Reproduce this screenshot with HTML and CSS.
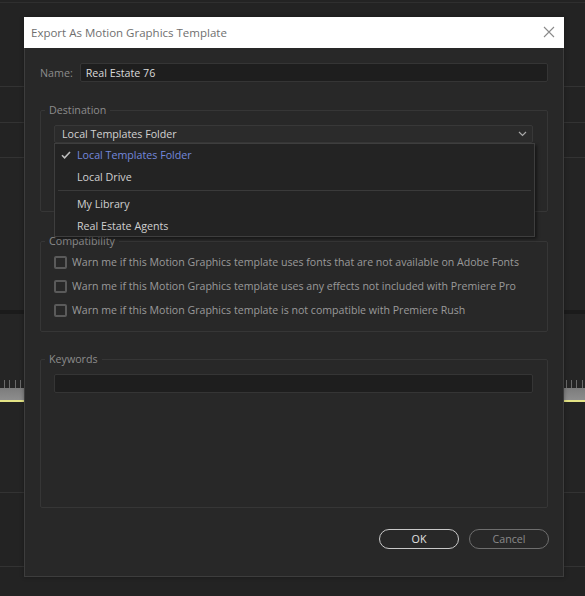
FILE: index.html
```html
<!DOCTYPE html>
<html>
<head>
<meta charset="utf-8">
<link rel="stylesheet" href="styles.css">
</head>
<body>
<div class="app">
  <div class="band b-top"></div>
  <div class="band b1"></div>
  <div class="band b2"></div>
  <div class="band b3"></div>
  <div class="band b4"></div>
  <div class="band b-dark"></div>
  <div class="band b5"></div>
  <div class="band b-ticks"></div>
  <div class="band b-bar"></div>
  <div class="band b-yellow"></div>
  <div class="band b6"></div>
  <div class="band b7"></div>
  <div class="band b8"></div>
</div>

<div class="dialog">
  <div class="titlebar">
    <span class="title">Export As Motion Graphics Template</span>
    <svg class="close" width="12" height="12" viewBox="0 0 12 12"><path d="M1 1L11 11M11 1L1 11" stroke="#8a8a8a" stroke-width="1.1" fill="none"/></svg>
  </div>
  <div class="content">
    <div class="name-row">
      <span class="label">Name:</span>
      <div class="input name-input">Real Estate 76</div>
    </div>

    <fieldset class="group dest">
      <legend>Destination</legend>
      <div class="select-wrap">
        <div class="select">
          <span>Local Templates Folder</span>
          <svg class="chev" width="9" height="6" viewBox="0 0 9 6"><path d="M1 1L4.5 4.5L8 1" stroke="#a8a8a8" stroke-width="1.2" fill="none"/></svg>
        </div>
        <div class="menu">
          <div class="item selected">
            <svg class="check" width="10" height="8" viewBox="0 0 10 8"><path d="M1 4.2L3.6 6.8L9 1" stroke="#bdbdbd" stroke-width="1.6" fill="none"/></svg>
            <span>Local Templates Folder</span>
          </div>
          <div class="item"><span>Local Drive</span></div>
          <div class="sep"></div>
          <div class="item"><span>My Library</span></div>
          <div class="item"><span>Real Estate Agents</span></div>
        </div>
      </div>
    </fieldset>

    <fieldset class="group compat">
      <legend>Compatibility</legend>
      <label class="check-row"><span class="box"></span><span>Warn me if this Motion Graphics template uses fonts that are not available on Adobe Fonts</span></label>
      <label class="check-row"><span class="box"></span><span>Warn me if this Motion Graphics template uses any effects not included with Premiere Pro</span></label>
      <label class="check-row"><span class="box"></span><span>Warn me if this Motion Graphics template is not compatible with Premiere Rush</span></label>
    </fieldset>

    <fieldset class="group keywords">
      <legend>Keywords</legend>
      <div class="input kw-input"></div>
    </fieldset>

    <div class="buttons">
      <button class="btn ok">OK</button>
      <button class="btn cancel">Cancel</button>
    </div>
  </div>
</div>
</body>
</html>
```

FILE: styles.css
```css
* { box-sizing: border-box; }
html, body {
  margin: 0;
  padding: 0;
  width: 585px;
  height: 596px;
  overflow: hidden;
  background: #232323;
  font-family: "Open Sans", "Noto Sans", sans-serif;
}

/* background application */
.app { position: relative; width: 585px; height: 596px; }
.band { width: 100%; }
.b-top { height: 3px; border-bottom: 1px solid #2f2f2f; }
.b1 { height: 84px; border-bottom: 1px solid #333; }
.b2 { height: 36px; border-bottom: 1px solid #333; }
.b3 { height: 35px; border-bottom: 1px solid #333; }
.b4 { height: 152px; background: #242424; }
.b-dark { height: 4px; background: #1b1b1b; }
.b5 { height: 66px; background: #252525; }
.b-ticks {
  height: 8px;
  background-image: repeating-linear-gradient(90deg, transparent 0 4px, #6a6a6a 4px 5px, transparent 5px 5.4px);
  background-color: #252525;
}
.b-bar { height: 12px; background: linear-gradient(#7c7c7c, #8d8d8d); }
.b-yellow { height: 2px; background: #e4e486; }
.b6 { height: 91px; border-bottom: 1px solid #333; background: #242424; }
.b7 { height: 74px; border-bottom: 1px solid #333; }
.b8 { height: 30px; }

/* dialog */
.dialog {
  position: absolute;
  left: 24px;
  top: 17px;
  width: 540px;
  height: 560px;
  background: #282828;
  border: 1px solid #3d3d3d;
  border-top: none;
  box-shadow: 0 0 4px rgba(0,0,0,0.35);
}
.titlebar {
  height: 31px;
  background: #ffffff;
  display: flex;
  align-items: center;
  justify-content: space-between;
  padding: 0 9px 0 7px;
  margin: 0 -1px;
}
.title {
  font-size: 11.5px;
  color: #6f6f6f;
}
.close { display: block; margin-top: -1px; }

.content {
  padding: 15px 15px 0 15px;
  display: flex;
  flex-direction: column;
}
.label { font-size: 10.7px; color: #8c8c8c; }
.name-row {
  display: flex;
  align-items: center;
  gap: 7px;
}
.input {
  background: #1e1e1e;
  border: 1px solid #353535;
  border-radius: 2px;
  height: 19px;
  font-size: 10.7px;
  color: #dadada;
  display: flex;
  align-items: center;
  padding: 0 5px;
}
.name-input { flex: 1; }

.group {
  margin: 21px 0 0 0;
  border: 1px solid #363636;
  border-radius: 2px;
  padding: 8px 14px 0 13px;
  min-width: 0;
}
.group legend {
  font-size: 10.7px;
  line-height: 14px;
  color: #8c8c8c;
  padding: 0 4px;
  margin-left: -9px;
}
.dest { height: 109px; }
.compat { height: 98px; padding-top: 2px; margin-top: 22px; }
.keywords { height: 156px; margin-top: 20px; }

.select-wrap { position: relative; }
.select {
  height: 18px;
  background: #2b2b2b;
  border: 1px solid #383838;
  border-radius: 2px;
  display: flex;
  align-items: center;
  justify-content: space-between;
  padding: 0 5px 0 7px;
  font-size: 10.7px;
  color: #d2d2d2;
}
.chev { display: block; }
.menu {
  position: absolute;
  left: 0;
  top: 18px;
  width: 481px;
  background: #232323;
  border: 1px solid #3e3e3e;
  box-shadow: 2px 2px 3px rgba(0,0,0,0.45);
  z-index: 2;
}
.item {
  height: 22px;
  display: flex;
  align-items: center;
  font-size: 10.7px;
  color: #d0d0d0;
  padding-left: 22px;
  position: relative;
}
.item:last-child { height: 21px; }
.item.selected { color: #7388dc; }
.check { position: absolute; left: 6px; top: 7px; }
.sep { height: 1px; background: #3a3a3a; margin: 2px 3px 2px 3px; }

.check-row {
  height: 24px;
  display: flex;
  align-items: center;
  gap: 5px;
  font-size: 10.6px;
  color: #9a9a9a;
  white-space: nowrap;
}
.box {
  width: 13px;
  height: 13px;
  border: 2px solid #5a5a5a;
  border-radius: 2px;
  flex: none;
}

.kw-input { width: 100%; }

.buttons {
  display: flex;
  justify-content: flex-end;
  gap: 10px;
  margin-top: 21px;
  margin-right: -1px;
}
.btn {
  width: 80px;
  height: 20px;
  border-radius: 10px;
  background: transparent;
  font-family: "Open Sans", "Noto Sans", sans-serif;
  font-size: 10.7px;
  padding: 0;
  line-height: 16px;
}
.ok { border: 1.5px solid #c9c9c9; color: #e2e2e2; }
.cancel { border: 1.5px solid #6e6e6e; color: #8a8a8a; }
```
